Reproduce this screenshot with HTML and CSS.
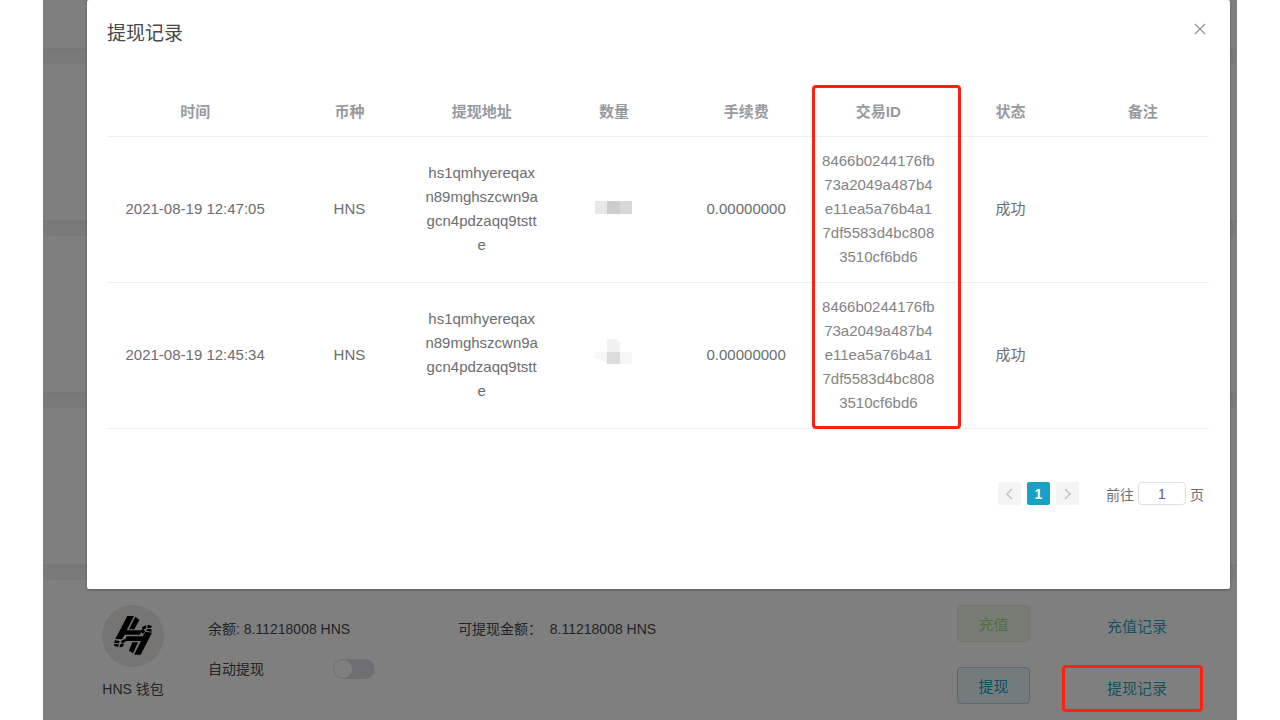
FILE: index.html
```html
<!DOCTYPE html>
<html lang="zh-CN">
<head>
    <meta charset="UTF-8">
    <meta name="viewport" content="width=device-width, initial-scale=1.0">
    <title>提现记录</title>
    <link rel="stylesheet" href="styles.css">
</head>
<body>

    <div class="screen">
        <div class="page">
            <div class="card card-top"></div>
            <div class="card"></div>
            <div class="card"></div>
            <div class="card"></div>

            <div class="card wallet">
                <div class="wallet-name">
                    <div class="avatar">
                        <svg viewBox="12 15 186 186" width="62" height="62" aria-hidden="true">
                            <g fill="#000">
                                <path d="M88 48h20L86 91h46l-6 13H80l-8 14-20-1z"/>
                                <path d="M112 50l12 10-15 28H93z"/>
                                <path d="M86 109h48l8-14 20 3-34 66h-20l21-41H80z"/>
                                <path d="M103 127h17l-15 33-12-8z"/>
                                <path d="M132 82l13-7-1 10-10 6z"/>
                                <path d="M149 74l13 4-4 6-10 1z"/>
                                <path d="M147 88l13-1 1 8-16-2z"/>
                                <path d="M131 88l11 5-7 9-6-6z"/>
                                <path d="M51 121l14 2-2 7-15-1z"/>
                                <path d="M69 123l12-6 2 8-12 6z"/>
                                <path d="M48 132l14 1-1 8-12-3z"/>
                                <path d="M66 133l13-2-5 9-9 2z"/>
                            </g>
                        </svg>
                    </div>
                    <span>HNS 钱包</span>
                </div>
                <div class="wallet-info">
                    <span class="balance">余额: 8.11218008 HNS</span>
                    <span class="available">可提现金额：&nbsp; 8.11218008 HNS</span>
                    <label for="auto">自动提现</label>
                    <input type="checkbox" id="auto" class="switch">
                </div>
                <div class="wallet-buttons">
                    <button type="button" class="btn btn-success">充值</button>
                    <button type="button" class="btn btn-primary">提现</button>
                </div>
                <div class="wallet-links">
                    <a href="#">充值记录</a>
                    <a href="#" class="marked">提现记录</a>
                </div>
            </div>
        </div>

        <div class="mask"></div>

        <div class="modal">
            <div class="modal-header">
                <h2>提现记录</h2>
                <button type="button" class="close" aria-label="关闭">
                    <svg viewBox="0 0 12 12" width="12" height="12"><path d="M1 1l10 10M11 1L1 11" stroke="#909399" stroke-width="1.2" fill="none"/></svg>
                </button>
            </div>

            <div class="records">
                <table>
                    <thead>
                        <tr>
                            <th class="col-time">时间</th>
                            <th>币种</th>
                            <th>提现地址</th>
                            <th>数量</th>
                            <th>手续费</th>
                            <th>交易ID</th>
                            <th>状态</th>
                            <th>备注</th>
                        </tr>
                    </thead>
                    <tbody>
                        <tr>
                            <td>2021-08-19 12:47:05</td>
                            <td>HNS</td>
                            <td>hs1qmhyereqaxn89mghszcwn9agcn4pdzaqq9tstte</td>
                            <td>
                                <svg class="mosaic" viewBox="0 0 37 26" width="37" height="26" aria-hidden="true">
                                    <path d="M0 5h12v13H0z" fill="#e8e8e8"/>
                                    <path d="M12 5h13v13H12z" fill="#cdcdcf"/>
                                    <path d="M25 5h12v13H25z" fill="#d8d8d8"/>
                                </svg>
                            </td>
                            <td>0.00000000</td>
                            <td class="txid">8466b0244176fb73a2049a487b4e11ea5a76b4a17df5583d4bc8083510cf6bd6</td>
                            <td>成功</td>
                            <td></td>
                        </tr>
                        <tr>
                            <td>2021-08-19 12:45:34</td>
                            <td>HNS</td>
                            <td>hs1qmhyereqaxn89mghszcwn9agcn4pdzaqq9tstte</td>
                            <td>
                                <svg class="mosaic" viewBox="0 3 37 26" width="37" height="26" aria-hidden="true">
                                    <path d="M12 0h9l4 4v9H12z" fill="#f1f1f1"/>
                                    <path d="M0 13h12v12l-5-4-7-2z" fill="#f7f7f7"/>
                                    <path d="M12 13h13v12H12z" fill="#dcdcdc"/>
                                    <path d="M25 13h12v12H25z" fill="#f6f6f6"/>
                                </svg>
                            </td>
                            <td>0.00000000</td>
                            <td class="txid">8466b0244176fb73a2049a487b4e11ea5a76b4a17df5583d4bc8083510cf6bd6</td>
                            <td>成功</td>
                            <td></td>
                        </tr>
                    </tbody>
                </table>
                <div class="column-mark"></div>
            </div>

            <div class="pagination">
                <button type="button" class="page-btn" aria-label="上一页" disabled>
                    <svg viewBox="0 0 12 12" width="12" height="12"><path d="M8 1L3 6l5 5" stroke="#c0c4cc" stroke-width="1.6" fill="none"/></svg>
                </button>
                <button type="button" class="page-btn active">1</button>
                <button type="button" class="page-btn" aria-label="下一页" disabled>
                    <svg viewBox="0 0 12 12" width="12" height="12"><path d="M3 1l5 5-5 5" stroke="#c0c4cc" stroke-width="1.6" fill="none"/></svg>
                </button>
                <label class="jump">前往 <input type="text" value="1"> 页</label>
            </div>
        </div>
    </div>

</body>
</html>
```

FILE: styles.css
```css
* {
    box-sizing: border-box;
}
body {
    margin: 0;
    background: #fff;
    color: #46484c;
    font-family: "Liberation Sans", "Noto Sans CJK SC", sans-serif;
    font-size: 15px;
}
button,
input {
    font-family: inherit;
    font-size: inherit;
}
.screen {
    position: relative;
    height: 100vh;
    margin: 0 43px;
    overflow: hidden;
}
.page {
    display: flex;
    flex-direction: column;
    gap: 16px;
    background: #f7f7f7;
}
.card {
    height: 156px;
    flex-shrink: 0;
    background: #fff;
    box-shadow: 0 2px 12px rgba(0, 0, 0, 0.06);
}
.card-top {
    height: 48px;
}
.mask {
    position: absolute;
    inset: 0;
    background: rgba(0, 0, 0, 0.5);
}

/* wallet */
.wallet {
    display: flex;
    align-items: flex-start;
    padding: 25px 34px 0 56px;
}
.wallet-name {
    width: 68px;
    display: flex;
    flex-direction: column;
    align-items: center;
    gap: 12px;
    font-size: 14px;
    line-height: 20px;
    white-space: nowrap;
}
.avatar {
    width: 62px;
    height: 62px;
    border-radius: 50%;
    background: #efe8e8;
}
.avatar svg {
    display: block;
}
.wallet-info {
    flex: 1;
    display: grid;
    grid-template-columns: 125px 125px 1fr;
    row-gap: 20px;
    align-items: center;
    margin-left: 41px;
    padding-top: 14px;
    font-size: 14px;
    line-height: 20px;
}
.balance {
    grid-column: span 2;
}
.switch {
    appearance: none;
    width: 42px;
    height: 20px;
    margin: 0;
    padding: 1px;
    border-radius: 10px;
    background: #dcdfe6;
}
.switch::before {
    content: "";
    display: block;
    width: 18px;
    height: 18px;
    border-radius: 50%;
    background: #fff;
}
.wallet-buttons {
    display: flex;
    flex-direction: column;
    gap: 25px;
}
.btn {
    width: 73px;
    height: 37px;
    border: 1px solid;
    border-radius: 4px;
}
.btn-success {
    color: #a4da89;
    background: #f0f9eb;
    border-color: #e1f3d8;
}
.btn-primary {
    color: #1a9fc4;
    background: #e8f6fa;
    border-color: #a3d9e8;
}
.wallet-links {
    width: 141px;
    margin-left: 32px;
    display: flex;
    flex-direction: column;
    gap: 15px;
}
.wallet-links a {
    position: relative;
    padding-left: 9px;
    color: #2aa3c6;
    line-height: 47px;
    height: 47px;
    margin-top: -2px;
    text-align: center;
    text-decoration: none;
}
.wallet-links .marked {
    margin-top: 0;
}
.wallet-links .marked::after {
    content: "";
    position: absolute;
    inset: 0;
    z-index: 1;
    border: 3px solid #ff2013;
    border-radius: 4px;
}

/* modal */
.modal {
    position: absolute;
    top: 0;
    left: 44px;
    right: 7px;
    padding: 20px 21px 84px 20px;
    border-radius: 2px;
    background: #fff;
    box-shadow: 0 1px 3px rgba(0, 0, 0, 0.3);
}
.modal-header {
    display: flex;
    justify-content: space-between;
    align-items: flex-start;
    height: 67px;
}
.modal-header h2 {
    margin: 0;
    font-size: 19px;
    font-weight: normal;
    line-height: 28px;
}
.close {
    width: 18px;
    height: 18px;
    padding: 0;
    border: none;
    background: none;
}
.close svg {
    display: block;
    margin: 3px;
}
.records {
    position: relative;
}
table {
    width: 100%;
    table-layout: fixed;
    border-collapse: collapse;
    color: #6b6d71;
    text-align: center;
    line-height: 24px;
}
th {
    padding: 13px 9px 12px;
    border-bottom: 1px solid #ebeef5;
    color: #979a9f;
}
.col-time {
    width: 16%;
}
td {
    padding: 12px 9px 13px;
    border-bottom: 1px solid #ebeef5;
    word-break: break-all;
}
.txid {
    color: #838385;
}
.mosaic {
    display: block;
    margin: 0 auto;
    overflow: visible;
}
.column-mark {
    position: absolute;
    top: -2px;
    bottom: 0;
    left: 64%;
    width: 149px;
    border: 3px solid #ff2013;
    border-radius: 4px;
}
.pagination {
    display: flex;
    justify-content: flex-end;
    align-items: center;
    gap: 6px;
    margin-top: 53px;
    padding-right: 5px;
    color: #6b6d71;
    font-size: 14px;
}
.page-btn {
    width: 23px;
    height: 23px;
    padding: 0;
    border: none;
    border-radius: 2px;
    background: #f4f4f5;
}
.page-btn svg {
    display: block;
    margin: 0 auto;
}
.page-btn.active {
    color: #fff;
    background: #18a0c6;
    font-weight: bold;
}
.jump {
    display: flex;
    align-items: center;
    gap: 4px;
    margin-left: 21px;
}
.jump input {
    width: 48px;
    height: 23px;
    padding: 0;
    border: 1px solid #dcdfe6;
    border-radius: 4px;
    color: #606266;
    text-align: center;
}
```
